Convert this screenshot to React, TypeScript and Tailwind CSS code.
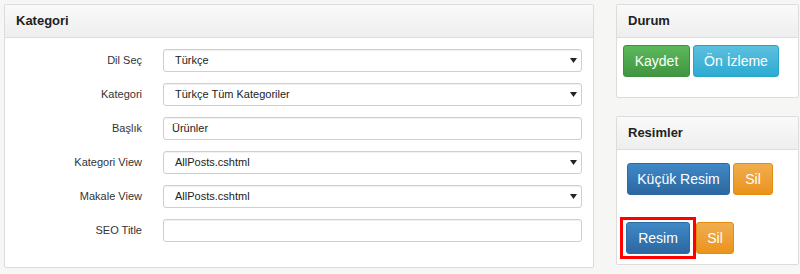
const fields = [
  { label: "Dil Seç", value: "Türkçe", select: true },
  { label: "Kategori", value: "Türkçe Tüm Kategoriler", select: true },
  { label: "Başlık", value: "Ürünler", select: false },
  { label: "Kategori View", value: "AllPosts.cshtml", select: true },
  { label: "Makale View", value: "AllPosts.cshtml", select: true },
  { label: "SEO Title", value: "", select: false },
];

function PanelHeader({ title }: { title: string }) {
  return (
    <div className="h-[33px] flex items-center px-[11px] border-b border-[#dddddd] bg-gradient-to-b from-[#fafafa] to-[#eeeeee] rounded-t-[2px]">
      <h3 className="text-[13px] font-bold text-[#222]">{title}</h3>
    </div>
  );
}

export default function App() {
  return (
    <div
      className="w-[800px] h-[274px] bg-[#f6f6f4] flex gap-[22px] pt-[4px] pl-[4px] overflow-hidden"
      style={{ fontFamily: '"Liberation Sans", Arial, sans-serif' }}
    >
      {/* main form */}
      <div className="w-[590px] h-[264px] bg-white border border-[#dcdcdc] rounded-[2px]">
        <PanelHeader title="Kategori" />
        <div className="pt-[11px] pr-[11px] flex flex-col gap-[11px]">
          {fields.map((f) => (
            <div key={f.label} className="flex items-center h-[23px]">
              <label className="w-[137px] text-right text-[11px] text-[#333]">{f.label}</label>
              <div className="ml-[21px] flex-1 h-[23px] border border-[#cfcfcf] rounded-[3px] flex items-center justify-between shadow-[inset_0_1px_1px_rgba(0,0,0,0.06)]">
                <span className={`text-[11px] text-[#222] ${f.select ? "pl-[11px]" : "pl-[8px]"}`}>
                  {f.value}
                </span>
                {f.select && (
                  <svg width="7" height="5" viewBox="0 0 7 5" className="mr-[4px]">
                    <path d="M0 0h7L3.5 5z" fill="#222" />
                  </svg>
                )}
              </div>
            </div>
          ))}
        </div>
      </div>

      {/* sidebar */}
      <div className="w-[183px] flex flex-col gap-[18px]">
        <div className="h-[94px] bg-white border border-[#dcdcdc] rounded-[2px]">
          <PanelHeader title="Durum" />
          <div className="pt-[7px] pl-[6px] flex gap-[3px]">
            <button className="w-[67px] h-[32px] rounded-[3px] border border-[#3e8f3e] bg-gradient-to-b from-[#5cb85c] to-[#419641] text-white text-[14px]">
              Kaydet
            </button>
            <button className="w-[86px] h-[32px] rounded-[3px] border border-[#28a4c9] bg-gradient-to-b from-[#5bc0de] to-[#2aabd2] text-white text-[14px]">
              Ön İzleme
            </button>
          </div>
        </div>

        <div className="h-[149px] bg-white border border-[#dcdcdc] rounded-[2px]">
          <PanelHeader title="Resimler" />
          <div className="pt-[13px] pl-[10px] flex gap-[3px]">
            <button className="w-[103px] h-[32px] rounded-[3px] border border-[#2b6aa3] bg-gradient-to-b from-[#4088c7] to-[#2c68a0] text-white text-[14px]">
              Küçük Resim
            </button>
            <button className="w-[40px] h-[32px] rounded-[3px] border border-[#e38d13] bg-gradient-to-b from-[#f0ad4e] to-[#eb9316] text-white text-[14px]">
              Sil
            </button>
          </div>
          <div className="mt-[22px] pl-[3px] flex items-center">
            <div className="border-[3px] border-[#ff0000] px-[3px] py-[2px]">
              <button className="w-[64px] h-[32px] rounded-[3px] border border-[#2b6aa3] bg-gradient-to-b from-[#4088c7] to-[#2c68a0] text-white text-[14px] block">
                Resim
              </button>
            </div>
            <button className="w-[38px] h-[32px] rounded-[3px] border border-[#e38d13] bg-gradient-to-b from-[#f0ad4e] to-[#eb9316] text-white text-[14px]">
              Sil
            </button>
          </div>
        </div>
      </div>
    </div>
  );
}
